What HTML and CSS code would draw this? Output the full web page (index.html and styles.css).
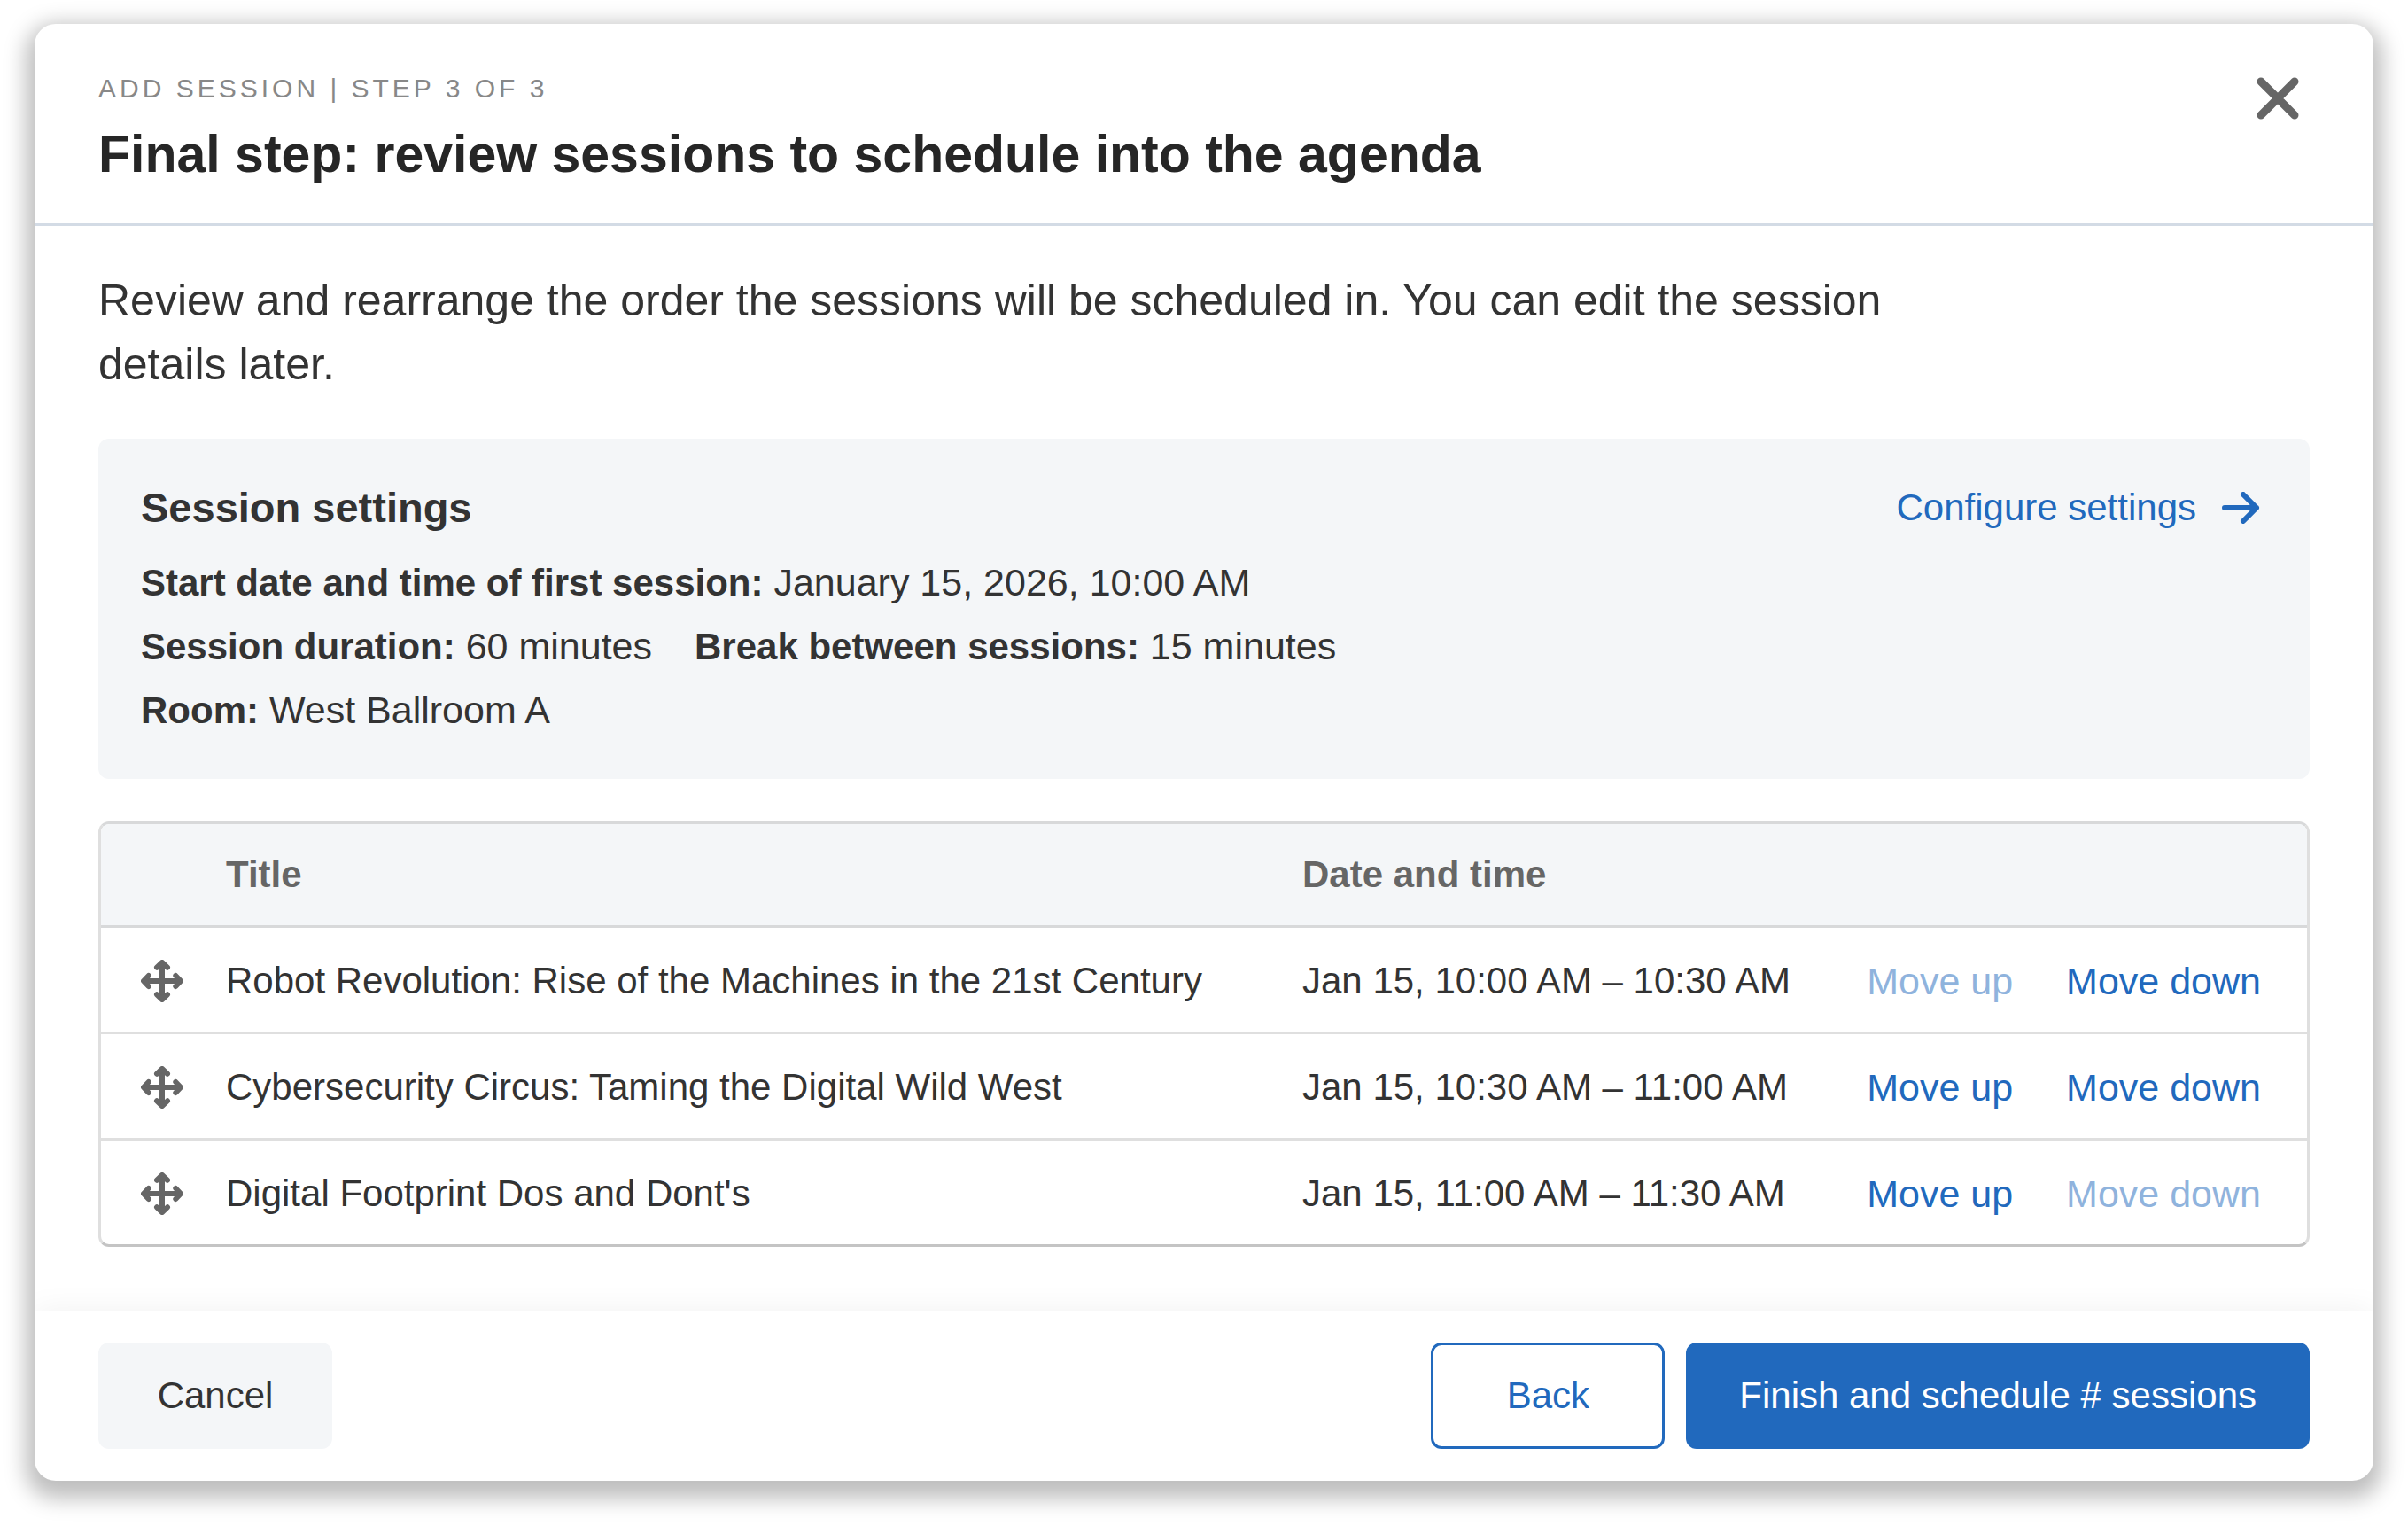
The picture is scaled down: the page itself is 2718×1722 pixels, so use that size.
FILE: index.html
```html
<!DOCTYPE html>
<html lang="en">
<head>
<meta charset="utf-8">
<meta name="viewport" content="width=device-width, initial-scale=1">
<title>Add session</title>
<link rel="stylesheet" href="styles.css">
</head>
<body>
<svg class="sprite" aria-hidden="true">
  <symbol id="icon-move" viewBox="0 0 48 48">
    <path d="M24 4V44M4 24H44" fill="none" stroke="currentColor" stroke-width="6"/>
    <path d="M18 8.700L24 3L30 8.700M18 39.300L24 45L30 39.300M8.700 18L3 24L8.700 30M39.300 18L45 24L39.300 30" fill="currentColor" stroke="currentColor" stroke-width="6" stroke-linecap="round" stroke-linejoin="round"/>
  </symbol>
</svg>
<main class="modal" role="dialog" aria-labelledby="modal-title">
  <header class="modal-header">
    <div class="heading">
      <p class="eyebrow">ADD SESSION | STEP 3 OF 3</p>
      <h1 class="title" id="modal-title">Final step: review sessions to schedule into the agenda</h1>
    </div>
    <button class="close" type="button" aria-label="Close">
      <svg class="close-icon" viewBox="0 0 48 48" aria-hidden="true"><path d="M5 5L43 43M43 5L5 43" fill="none" stroke="currentColor" stroke-width="9" stroke-linecap="round"/></svg>
    </button>
  </header>

  <div class="modal-body">
    <p class="intro">Review and rearrange the order the sessions will be scheduled in. You can edit the session details later.</p>

    <section class="settings">
      <div class="settings-head">
        <h2 class="settings-title">Session settings</h2>
        <a class="configure" href="#settings">Configure settings
          <svg class="arrow-icon" viewBox="0 0 44 36" aria-hidden="true"><path d="M4 18H40M25 3L40 18L25 33" fill="none" stroke="currentColor" stroke-width="6" stroke-linecap="round" stroke-linejoin="round"/></svg>
        </a>
      </div>
      <p class="settings-line"><span><strong>Start date and time of first session:</strong> January 15, 2026, 10:00 AM</span></p>
      <p class="settings-line"><span><strong>Session duration:</strong> 60 minutes</span><span><strong>Break between sessions:</strong> 15 minutes</span></p>
      <p class="settings-line"><span><strong>Room:</strong> West Ballroom A</span></p>
    </section>

    <div class="table-frame">
      <table class="sessions">
        <colgroup><col class="col-handle"><col><col class="col-date"><col class="col-actions"></colgroup>
        <thead>
          <tr><td></td><th scope="col">Title</th><th scope="col">Date and time</th><td></td></tr>
        </thead>
        <tbody>
          <tr>
            <td class="handle"><svg class="move-icon" aria-hidden="true"><use href="#icon-move"/></svg></td>
            <td>Robot Revolution: Rise of the Machines in the 21st Century</td>
            <td>Jan 15, 10:00 AM – 10:30 AM</td>
            <td><div class="actions"><button class="link" type="button" disabled>Move up</button><button class="link" type="button">Move down</button></div></td>
          </tr>
          <tr>
            <td class="handle"><svg class="move-icon" aria-hidden="true"><use href="#icon-move"/></svg></td>
            <td>Cybersecurity Circus: Taming the Digital Wild West</td>
            <td>Jan 15, 10:30 AM – 11:00 AM</td>
            <td><div class="actions"><button class="link" type="button">Move up</button><button class="link" type="button">Move down</button></div></td>
          </tr>
          <tr>
            <td class="handle"><svg class="move-icon" aria-hidden="true"><use href="#icon-move"/></svg></td>
            <td>Digital Footprint Dos and Dont's</td>
            <td>Jan 15, 11:00 AM – 11:30 AM</td>
            <td><div class="actions"><button class="link" type="button">Move up</button><button class="link" type="button" disabled>Move down</button></div></td>
          </tr>
        </tbody>
      </table>
    </div>
  </div>

  <footer class="modal-footer">
    <button class="button button-muted" type="button">Cancel</button>
    <div class="footer-end">
      <button class="button button-outline" type="button">Back</button>
      <button class="button button-primary" type="button">Finish and schedule # sessions</button>
    </div>
  </footer>
</main>
</body>
</html>
```
FILE: styles.css
```css
:root {
  --blue: #2169bd;
  --text: #333;
  --gray: #666;
  --panel: #f4f6f8;
}

* { box-sizing: border-box; }

body {
  margin: 0;
  padding: 27px 39px 51px;
  background: #fff;
  color: var(--text);
  font: 42px/72px "Liberation Sans", Arial, sans-serif;
}

h1, h2, p { margin: 0; }

button {
  margin: 0;
  padding: 0;
  border: 0;
  background: none;
  color: inherit;
  font: inherit;
  cursor: pointer;
}

svg { display: block; }

.sprite { display: none; }

.modal {
  border-radius: 24px;
  background: #fff;
  box-shadow: 0 10px 24px 10px rgba(0, 0, 0, .26);
}

.modal-header {
  display: flex;
  justify-content: space-between;
  align-items: flex-start;
  padding: 53px 72px 42px;
  border-bottom: 3px solid #d3dbe5;
}

.heading {
  display: flex;
  flex-direction: column;
  gap: 18px;
}

.eyebrow {
  color: #888;
  font-size: 30px;
  line-height: 40px;
  letter-spacing: 4px;
}

.title {
  color: #262626;
  font-size: 59px;
  line-height: 72px;
}

.close {
  padding: 7px 12px;
  color: var(--gray);
}

.close-icon {
  width: 48px;
  height: 48px;
}

.modal-body {
  display: flex;
  flex-direction: column;
  gap: 48px;
  padding: 48px 72px 72px;
}

.intro {
  max-width: 2100px;
  font-size: 50px;
}

.settings {
  padding: 42px 48px;
  border-radius: 12px;
  background: var(--panel);
}

.settings-head {
  display: flex;
  justify-content: space-between;
  margin-bottom: 12px;
}

.settings-title {
  font-size: 47px;
}

.configure {
  display: flex;
  align-items: center;
  gap: 28px;
  padding-right: 8px;
  color: var(--blue);
  text-decoration: none;
}

.arrow-icon {
  width: 44px;
  height: 36px;
}

.settings-line {
  display: flex;
  flex-wrap: wrap;
  column-gap: 48px;
  font-size: 43px;
}

.settings-line strong {
  font-size: 42px;
  line-height: 1;
}

.table-frame {
  overflow: hidden;
  border: 3px solid #dfdfdf;
  border-top-color: #d8d9da;
  border-bottom-color: #c4c4c4;
  border-radius: 12px;
}

.sessions {
  width: 100%;
  table-layout: fixed;
  border-spacing: 0;
}

.col-handle { width: 141px; }
.col-date { width: 632px; }
.col-actions { width: 502px; }

.sessions th,
.sessions td {
  height: 120px;
  padding: 3px 0 0;
  border-bottom: 3px solid #dfdfdf;
  text-align: left;
}

.sessions thead th,
.sessions thead td {
  height: 117px;
  padding: 0;
  border-bottom-color: #d8d9da;
  background: var(--panel);
  color: var(--gray);
}

.sessions tbody tr:last-child td {
  height: 117px;
  border-bottom: 0;
}

.sessions .handle {
  padding-left: 45px;
  color: var(--gray);
}

.move-icon {
  width: 48px;
  height: 48px;
}

.actions {
  display: flex;
  justify-content: flex-end;
  gap: 60px;
  padding-right: 52px;
}

.link {
  color: var(--blue);
  font-size: 43px;
}

.link:disabled { opacity: .5; }

.modal-footer {
  display: flex;
  justify-content: space-between;
  padding: 36px 72px;
  border-radius: 0 0 24px 24px;
  box-shadow: 0 0 36px rgba(0, 0, 0, .06);
  clip-path: inset(-36px 0 0 0 round 0 0 24px 24px);
}

.footer-end {
  display: flex;
  gap: 24px;
}

.button {
  min-width: 264px;
  height: 120px;
  padding: 0 60px;
  border-radius: 12px;
}

.button-muted { background: var(--panel); }

.button-outline {
  border: 3px solid var(--blue);
  color: var(--blue);
}

.button-primary {
  background: var(--blue);
  color: #fff;
}
```
